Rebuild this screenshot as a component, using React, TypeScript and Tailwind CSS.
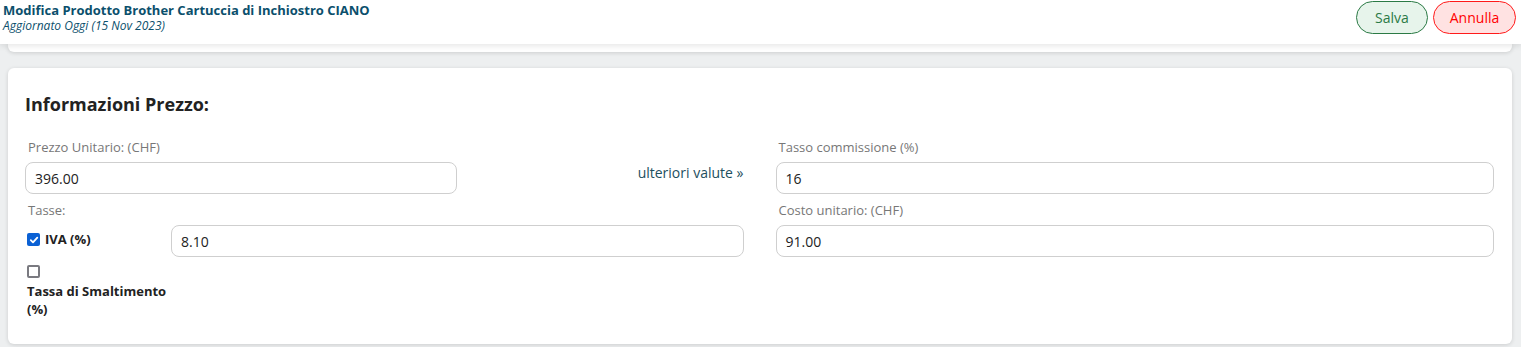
import React from 'react';

const Label: React.FC<{ children: React.ReactNode }> = ({ children }) => (
  <div className="text-[13px] leading-4 text-[#777] pl-[3px] mb-[7px]">{children}</div>
);

const Field: React.FC<{ value: string; className?: string }> = ({ value, className = '' }) => (
  <div
    className={`h-8 flex items-center rounded-lg border border-[#cfcfcf] bg-white pl-[9px] text-[14px] text-[#222] ${className}`}
  >
    {value}
  </div>
);

const Checkbox: React.FC<{ checked?: boolean }> = ({ checked }) =>
  checked ? (
    <span className="flex h-[13px] w-[13px] shrink-0 items-center justify-center rounded-[2px] bg-[#0b61d4]">
      <svg width="10" height="10" viewBox="0 0 10 10" fill="none">
        <path d="M1.8 5.2 L4 7.4 L8.3 2.6" stroke="white" strokeWidth="1.8" strokeLinecap="round" strokeLinejoin="round" />
      </svg>
    </span>
  ) : (
    <span className="block h-[13px] w-[13px] rounded-[2px] border-2 border-[#7a7a80] bg-white" />
  );

export default function App() {
  return (
    <div className="min-h-screen bg-[#edeff0] font-['Open_Sans',sans-serif]">
      {/* top bar */}
      <header className="relative z-10 flex h-11 items-start justify-between bg-white pl-[3px] pr-[5px] shadow-[0_2px_6px_rgba(0,0,0,0.10)]">
        <div className="pt-[2px] text-[#0b4f6c]">
          <div className="text-[13px] font-bold leading-4">Modifica Prodotto Brother Cartuccia di Inchiostro CIANO</div>
          <div className="text-[12px] italic leading-4">Aggiornato Oggi (15 Nov 2023)</div>
        </div>
        <div className="flex gap-[5px] pt-px">
          <button className="h-[33px] w-[72px] rounded-full border border-[#2b7a45] bg-[#e7f4eb] text-[14px] text-[#2b7a45]">
            Salva
          </button>
          <button className="h-[33px] w-[83px] rounded-full border border-[#ff1a1a] bg-[#ffe2e2] text-[14px] text-[#ff0000]">
            Annulla
          </button>
        </div>
      </header>

      {/* end of previous card */}
      <div className="ml-2 mr-[9px] h-2 rounded-b-md bg-white shadow-[0_1px_4px_rgba(0,0,0,0.14)]" />

      <div className="ml-2 mr-[9px] mt-4 rounded-md bg-white pl-[17px] pr-[18px] pb-[26px] pt-6 shadow-[0_1px_4px_rgba(0,0,0,0.14)]">
        <h2 className="mb-[23px] text-[18px] font-bold leading-6 text-[#222]">Informazioni Prezzo:</h2>

        <div className="grid grid-cols-2 gap-x-8">
          {/* left column */}
          <div className="flex flex-col">
            <div className="flex items-center justify-between">
              <div className="w-[432px]">
                <Label>Prezzo Unitario: (CHF)</Label>
                <Field value="396.00" />
              </div>
              <span className="pt-[11px] text-[14px] text-[#1d4f60]">ulteriori valute »</span>
            </div>

            <div className="mt-2">
              <Label>Tasse:</Label>
              <div className="flex items-center">
                <div className="flex w-[146px] shrink-0 items-center gap-[5px] pl-[2px] pb-[3px]">
                  <Checkbox checked />
                  <span className="text-[13px] font-bold text-[#222]">IVA (%)</span>
                </div>
                <Field value="8.10" className="flex-1" />
              </div>
              <div className="mt-2 w-[146px] pl-[2px]">
                <Checkbox />
                <div className="mt-[5px] text-[13px] font-bold leading-[17.5px] text-[#222]">Tassa di Smaltimento (%)</div>
              </div>
            </div>
          </div>

          {/* right column */}
          <div className="flex flex-col">
            <Label>Tasso commissione (%)</Label>
            <Field value="16" />
            <div className="mt-2">
              <Label>Costo unitario: (CHF)</Label>
              <Field value="91.00" />
            </div>
          </div>
        </div>
      </div>
    </div>
  );
}
